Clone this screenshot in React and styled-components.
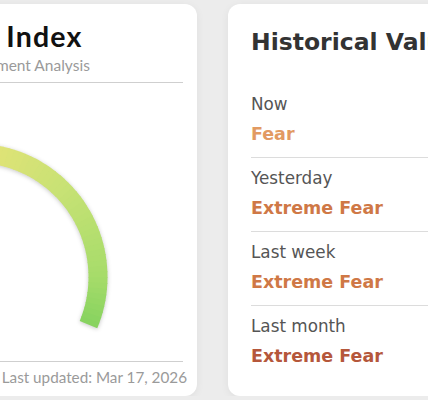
import styled, { createGlobalStyle } from "styled-components";

const GlobalStyle = createGlobalStyle`
  html, body {
    margin: 0;
    padding: 0;
    overflow: hidden;
    background: #ececec;
  }
`;

const Page = styled.div`
  display: flex;
  gap: 31px;
  height: 392px;
  padding-top: 4px;
  margin-left: -249px;
  width: 1000px;
`;

const Card = styled.div`
  flex: 0 0 ${({ width }) => width}px;
  display: flex;
  flex-direction: column;
  box-sizing: border-box;
  background: #fff;
  border-radius: 12px;
  box-shadow: 0 2px 8px rgba(0, 0, 0, 0.06);
`;

const GaugeCard = styled(Card)`
  padding: 16px 10px 9px;
  font-family: Lato, "Liberation Sans", sans-serif;
`;

const Header = styled.div`
  text-align: center;
  margin-right: 4px;
  padding: 0 44px 7px 0;
  border-bottom: 1px solid #cfcfcf;
`;

const Title = styled.h1`
  margin: 0;
  font-size: 28.5px;
  line-height: 32px;
  font-weight: 700;
  letter-spacing: 1.2px;
  color: #111;
  white-space: nowrap;
`;

const Subtitle = styled.p`
  margin: 3px 0 0;
  font-size: 15.5px;
  line-height: 20px;
  color: #9a9a9a;
  white-space: nowrap;
`;

const GaugeArea = styled.div`
  flex: 1;
  display: flex;
  justify-content: center;
`;

const GaugeSvg = styled.svg`
  display: block;
  filter: drop-shadow(0 1px 2px rgba(0, 0, 0, 0.22));
`;

const Footer = styled.div`
  display: flex;
  flex-direction: column;
`;

const Rule = styled.div`
  height: 1px;
  margin-right: 4px;
  background: #cfcfcf;
`;

const Stamp = styled.div`
  padding-top: 5px;
  text-align: right;
  font-size: 15.25px;
  line-height: 20px;
  color: #9a9a9a;
`;

const HistoryCard = styled(Card)`
  padding: 24px 23px 17px;
  font-family: "DejaVu Sans", Verdana, sans-serif;
`;

const HistoryTitle = styled.h2`
  margin: 0 0 28px;
  font-size: 23.5px;
  line-height: 28px;
  font-weight: 700;
  color: #333;
  white-space: nowrap;
`;

const Row = styled.div`
  padding: 9px 0 10px;
  border-top: ${({ first }) => (first ? "none" : "1px solid #dcdcdc")};
`;

const Label = styled.div`
  font-size: 16.8px;
  line-height: 22px;
  color: #555;
`;

const Value = styled.div`
  margin-top: 6px;
  font-size: 17.5px;
  line-height: 26px;
  font-weight: 700;
  color: ${({ tone }) => tone};
`;

const history = [
  { label: "Now", value: "Fear", tone: "#e29a62" },
  { label: "Yesterday", value: "Extreme Fear", tone: "#cf7846" },
  { label: "Last week", value: "Extreme Fear", tone: "#cf7846" },
  { label: "Last month", value: "Extreme Fear", tone: "#b5573b" },
];

// colour stops along the arc, by angle in degrees
const stops = [
  [202.6, [227, 93, 79]],
  [160, [239, 148, 79]],
  [120, [240, 200, 96]],
  [90, [230, 227, 119]],
  [45, [200, 226, 117]],
  [0, [166, 220, 106]],
  [-22.6, [134, 211, 95]],
];

const colorAt = (a) => {
  for (let i = 0; i < stops.length - 1; i++) {
    const [a0, c0] = stops[i];
    const [a1, c1] = stops[i + 1];
    if (a <= a0 && a >= a1) {
      const t = (a0 - a) / (a0 - a1);
      const c = c0.map((v, k) => Math.round(v + (c1[k] - v) * t));
      return `rgb(${c.join(",")})`;
    }
  }
  return "rgb(134,211,95)";
};

const W = 300;
const H = 277;
const CX = 150;
const CY = 194;
const R = 124;

const pt = (a) => {
  const r = (a * Math.PI) / 180;
  return `${(CX + R * Math.cos(r)).toFixed(2)} ${(CY - R * Math.sin(r)).toFixed(2)}`;
};

const Gauge = () => {
  const start = 202.6;
  const end = -22.6;
  const n = 90;
  const step = (start - end) / n;
  const segs = [];
  for (let i = 0; i < n; i++) {
    const a = start - i * step;
    const b = Math.max(end, a - step - 0.4);
    segs.push(
      <path
        key={i}
        d={`M ${pt(a)} A ${R} ${R} 0 0 1 ${pt(b)}`}
        stroke={colorAt(a - step / 2)}
        strokeWidth="19"
        fill="none"
      />
    );
  }
  return (
    <GaugeSvg width={W} height={H} viewBox={`0 0 ${W} ${H}`}>
      <g>{segs}</g>
    </GaugeSvg>
  );
};

export default function App() {
  return (
    <>
      <GlobalStyle />
      <Page>
        <GaugeCard width={446}>
          <Header>
            <Title>Fear &amp; Greed Index</Title>
            <Subtitle>Global Crypto Market Sentiment Analysis</Subtitle>
          </Header>
          <GaugeArea>
            <Gauge />
          </GaugeArea>
          <Footer>
            <Rule />
            <Stamp>Last updated: Mar 17, 2026</Stamp>
          </Footer>
        </GaugeCard>
        <HistoryCard width={446}>
          <HistoryTitle>Historical Values</HistoryTitle>
          {history.map((h, i) => (
            <Row key={h.label} first={i === 0}>
              <Label>{h.label}</Label>
              <Value tone={h.tone}>{h.value}</Value>
            </Row>
          ))}
        </HistoryCard>
      </Page>
    </>
  );
}
